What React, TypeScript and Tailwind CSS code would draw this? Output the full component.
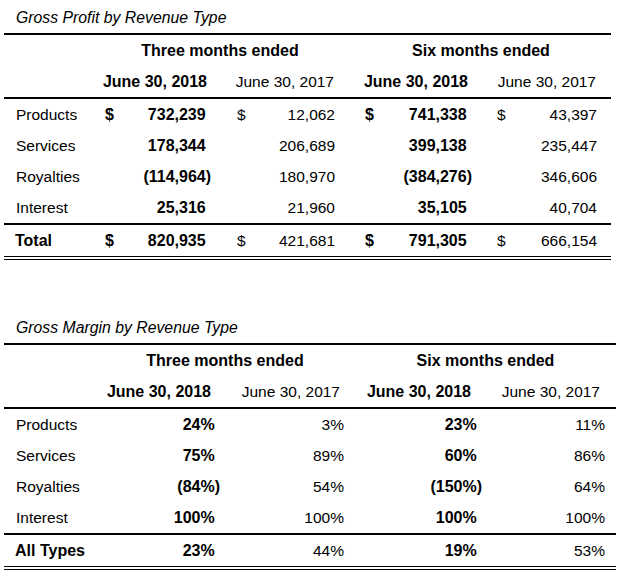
import React from 'react';

type Col = {
  w: string;       // full cell width
  pl: string;      // padding before the $ sign
  headPr: string;  // header right padding
  bold: boolean;
};

type TableSpec = {
  title: string;
  width: string;
  labelW: string;
  cols: Col[];
  group1: string;
  group2: string;
  dollars: boolean;
  rows: { label: string; values: string[]; total?: boolean; dollar?: boolean }[];
};

const profit: TableSpec = {
  title: 'Gross Profit by Revenue Type',
  width: 'w-[607px]',
  labelW: 'w-[101px]',
  cols: [
    { w: 'w-[106px]', pl: 'pl-0', headPr: 'pr-[4px]', bold: true },
    { w: 'w-[124px]', pl: 'pl-[26px]', headPr: 'pr-[1px]', bold: false },
    { w: 'w-[137px]', pl: 'pl-[30px]', headPr: 'pr-[4px]', bold: true },
    { w: 'w-[125px]', pl: 'pl-[25px]', headPr: 'pr-[1px]', bold: false },
  ],
  group1: 'w-[230px]',
  group2: 'w-[262px] pl-[30px]',
  dollars: true,
  rows: [
    { label: 'Products', values: ['732,239', '12,062', '741,338', '43,397'], dollar: true },
    { label: 'Services', values: ['178,344', '206,689', '399,138', '235,447'] },
    { label: 'Royalties', values: ['(114,964)', '180,970', '(384,276)', '346,606'] },
    { label: 'Interest', values: ['25,316', '21,960', '35,105', '40,704'] },
    { label: 'Total', values: ['820,935', '421,681', '791,305', '666,154'], dollar: true, total: true },
  ],
};

const margin: TableSpec = {
  title: 'Gross Margin by Revenue Type',
  width: 'w-[612px]',
  labelW: 'w-[106px]',
  cols: [
    { w: 'w-[110px]', pl: 'pl-0', headPr: 'pr-[9px]', bold: true },
    { w: 'w-[124px]', pl: 'pl-0', headPr: 'pr-[4px]', bold: false },
    { w: 'w-[138px]', pl: 'pl-0', headPr: 'pr-[11px]', bold: true },
    { w: 'w-[123px]', pl: 'pl-0', headPr: 'pr-[5px]', bold: false },
  ],
  group1: 'w-[234px] pr-[4px]',
  group2: 'w-[261px] pl-[27px] pr-[5px]',
  dollars: false,
  rows: [
    { label: 'Products', values: ['24%', '3%', '23%', '11%'] },
    { label: 'Services', values: ['75%', '89%', '60%', '86%'] },
    { label: 'Royalties', values: ['(84%)', '54%', '(150%)', '64%'] },
    { label: 'Interest', values: ['100%', '100%', '100%', '100%'] },
    { label: 'All Types', values: ['23%', '44%', '19%', '53%'], total: true },
  ],
};

function Value({ col, value, dollar }: { col: Col; value: string; dollar?: boolean }) {
  const neg = value.startsWith('(');
  return (
    <div
      className={`${col.w} ${col.pl} flex h-full items-center justify-between whitespace-nowrap ${
        col.bold ? 'font-bold text-[16px]' : 'text-[15.5px]'
      }`}
    >
      <span>{dollar ? '$' : ''}</span>
      <span>
        {value}
        {col.bold && !neg && <span className="invisible">)</span>}
      </span>
    </div>
  );
}

function Table({ spec }: { spec: TableSpec }) {
  return (
    <section className={`${spec.width} ml-[4px]`}>
      <div className="h-[33px] pt-[9px] pl-[12px] text-[15.8px] italic leading-[18px]">{spec.title}</div>

      <div className="border-t-2 border-black">
        <div className="flex h-[31px] items-center whitespace-nowrap text-[16px] font-bold">
          <div className={spec.labelW} />
          <div className={`${spec.group1} text-center`}>Three months ended</div>
          <div className={`${spec.group2} text-center`}>Six months ended</div>
        </div>
        <div className="flex h-[31px] items-center">
          <div className={spec.labelW} />
          {spec.cols.map((c, i) => (
            <div
              key={i}
              className={`${c.w} ${c.headPr} flex justify-end whitespace-nowrap ${
                c.bold ? 'font-bold text-[16px]' : 'text-[15.5px]'
              }`}
            >
              {c.bold ? 'June 30, 2018' : 'June 30, 2017'}
            </div>
          ))}
        </div>
      </div>

      <div className="border-t-2 border-black">
        {spec.rows
          .filter((r) => !r.total)
          .map((r) => (
            <div key={r.label} className="flex h-[31px] items-center">
              <div className={`${spec.labelW} pl-[12px] text-[15.5px]`}>{r.label}</div>
              {spec.cols.map((c, i) => (
                <Value key={i} col={c} value={r.values[i]} dollar={spec.dollars && r.dollar} />
              ))}
            </div>
          ))}
      </div>

      <div className="border-t-2 border-black">
        {spec.rows
          .filter((r) => r.total)
          .map((r) => (
            <div key={r.label} className="flex h-[31px] items-center">
              <div className={`${spec.labelW} pl-[11px] whitespace-nowrap text-[16px] font-bold`}>{r.label}</div>
              {spec.cols.map((c, i) => (
                <Value key={i} col={c} value={r.values[i]} dollar={spec.dollars && r.dollar} />
              ))}
            </div>
          ))}
      </div>
      {/* double underline */}
      <div className="h-[4px] border-y border-black" />
    </section>
  );
}

export default function App() {
  return (
    <div className="h-[583px] w-[640px] bg-white font-['Liberation_Sans',Arial,sans-serif] text-black">
      <Table spec={profit} />
      <div className="h-[50px]" />
      <Table spec={margin} />
    </div>
  );
}
